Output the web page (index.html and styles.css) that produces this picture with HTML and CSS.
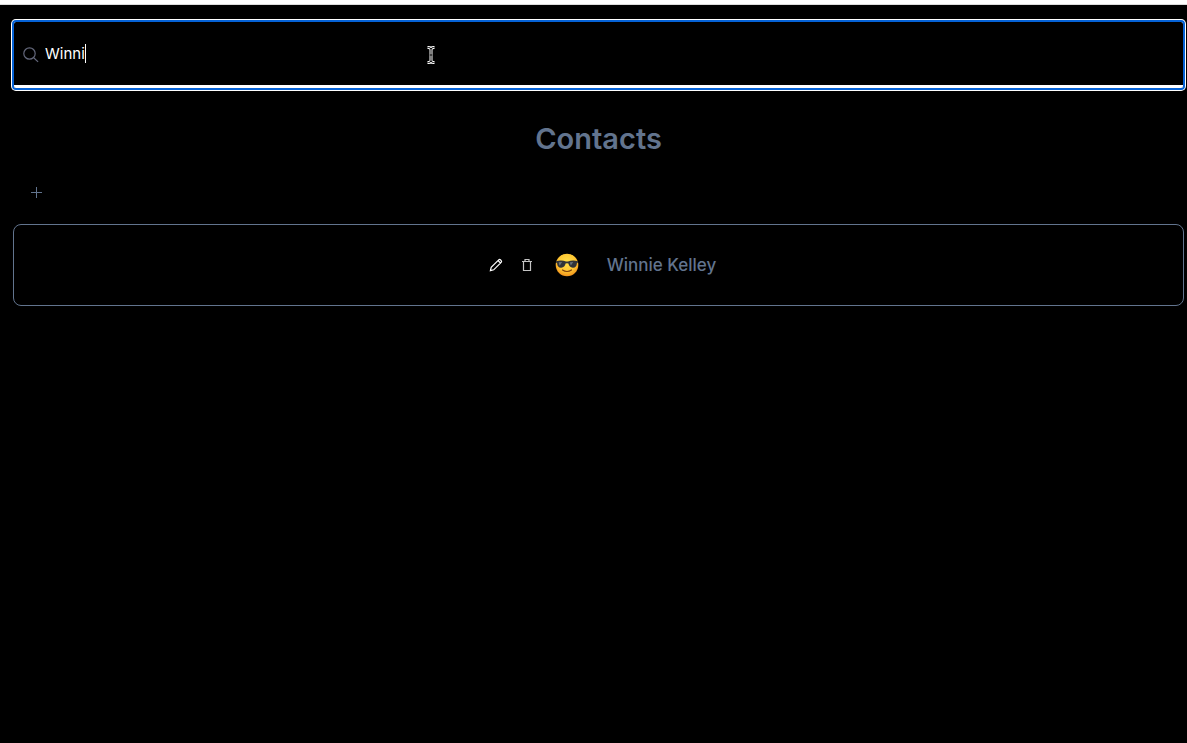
FILE: index.html
```html
<!DOCTYPE html>
<html lang="en">
<head>
<meta charset="utf-8">
<meta name="viewport" content="width=device-width, initial-scale=1">
<title>Contacts</title>
<link rel="stylesheet" href="styles.css">
</head>
<body>
<div class="top-strip"></div>
<main class="page">
  <form class="search" role="search">
    <svg class="search-icon" viewBox="0 0 16 16" aria-hidden="true"><circle cx="6.5" cy="6.5" r="5.7"/><path d="M10.700 10.700l4.400 4.200"/></svg>
    <input class="search-input" type="text" value="Winni" aria-label="Search contacts" autocomplete="off" spellcheck="false">
    <span class="caret"></span>
    <svg class="pointer" viewBox="0 0 10 20" aria-hidden="true">
      <path class="pointer-edge" d="M1.500 2.500h1q2.500 0 2.500 2q0-2 2.500-2h1M5 4.500v11M1.500 17.500h1q2.500 0 2.500-2q0 2 2.500 2h1M3.800 10h2.400"/>
      <path class="pointer-core" d="M1.500 2.500h1q2.500 0 2.500 2q0-2 2.500-2h1M5 4.500v11M1.500 17.500h1q2.500 0 2.500-2q0 2 2.500 2h1M3.800 10h2.400"/>
    </svg>
  </form>
  <h1 class="title">Contacts</h1>
  <button class="add" type="button" aria-label="Add contact">
    <svg class="add-icon" viewBox="0 0 12 12" aria-hidden="true"><path d="M6.5 1v11M1 6.500h11"/></svg>
  </button>
  <ul class="contacts">
    <li class="contact">
      <button class="action" type="button" aria-label="Edit">
        <svg class="action-icon edit-icon" viewBox="0 0 14 14" aria-hidden="true"><path d="M1.400 12.600l.8-3.300 7.500-7.500q.8-.8 1.700 0l.8.8q.8.9 0 1.700l-7.500 7.500zM9 2.500l2.500 2.500"/></svg>
      </button>
      <button class="action" type="button" aria-label="Delete">
        <svg class="action-icon delete-icon" viewBox="0 0 14 14" aria-hidden="true"><path d="M2 3.500h10M5 3.500v-2h4v2M3.500 3.500v9h7v-9"/></svg>
      </button>
      <svg class="avatar" viewBox="0 0 24 24" role="img" aria-label="Smiling face with sunglasses">
        <defs>
          <radialGradient id="face" cx="50%" cy="38%" r="65%"><stop offset="0" stop-color="#ffe04a"/><stop offset=".6" stop-color="#fec632"/><stop offset="1" stop-color="#f08a18"/></radialGradient>
        </defs>
        <circle cx="12" cy="12" r="11.300" fill="url(#face)"/>
        <path d="M.9 8.200Q6.500 6.900 11 8.400h2Q17.500 6.900 23.100 8.200l-.3 1.500-.9.5q-.3 4.300-3.800 4.500-3.800.2-4.700-4.100-1.400-.9-2.800 0-.9 4.300-4.700 4.100-3.500-.2-3.800-4.500l-.9-.5z" fill="#303338"/>
        <path d="M3.800 9.300l3.300-.2-2.400 3.600q-.9-1.200-.9-3.400zM15 9.300l3.300-.2-2.400 3.400q-.9-1.200-.9-3.200z" fill="#667078"/>
        <path d="M7.500 17Q12 20 16.500 17" fill="none" stroke="#7a3c0c" stroke-width="1.200" stroke-linecap="round"/>
      </svg>
      <span class="name">Winnie Kelley</span>
    </li>
  </ul>
</main>
</body>
</html>
```
FILE: styles.css
```css
* {
  box-sizing: border-box;
}

body {
  margin: 0;
  background: #000;
  color: #62748e;
  font-family: Inter, "Liberation Sans", sans-serif;
}

.top-strip {
  height: 5px;
  background: #fff;
  border-bottom: 1px solid #dcdcdc;
}

.page {
  padding: 17px 3px 0 13px;
}

.search {
  position: relative;
  display: flex;
  align-items: center;
  gap: 6px;
  height: 66px;
  margin: 0 1px;
  padding-left: 9px;
  border-bottom: 3px solid #fff;
  border-radius: 2px;
  box-shadow: 0 0 0 2px #0562d6, 0 0 0 3px #fff;
}

.search-icon {
  width: 16px;
  height: 16px;
  margin-top: 2px;
  fill: none;
  stroke: #64687c;
  stroke-width: 1.2;
}

.search-input {
  flex: 1;
  min-width: 0;
  height: 100%;
  padding: 0;
  border: 0;
  outline: 0;
  background: transparent;
  color: #fff;
  font: 400 15px/24px Inter, "Liberation Sans", sans-serif;
}

.caret {
  position: absolute;
  left: 71px;
  top: 22px;
  width: 1px;
  height: 19px;
  background: #fff;
}

.pointer {
  position: absolute;
  left: 412px;
  top: 23px;
  width: 10px;
  height: 20px;
  fill: none;
}

.pointer-edge {
  stroke: #fff;
  stroke-width: 3;
}

.pointer-core {
  stroke: #000;
  stroke-width: 1;
}

.title {
  margin: 33px 0 0;
  font-size: 29px;
  font-weight: 600;
  line-height: 36px;
  text-align: center;
}

.add {
  display: flex;
  align-items: center;
  justify-content: center;
  width: 46px;
  height: 40px;
  margin-top: 15px;
  padding: 0;
  border: 0;
  background: none;
}

.add-icon {
  width: 12px;
  height: 12px;
  fill: none;
  stroke: #62748e;
  stroke-width: 1;
}

.contacts {
  margin: 12px 0 0;
  padding: 0;
  list-style: none;
}

.contact {
  display: flex;
  align-items: center;
  justify-content: center;
  height: 82px;
  border: 1px solid #62748e;
  border-radius: 8px;
}

.action {
  display: flex;
  align-items: center;
  justify-content: center;
  width: 31px;
  height: 32px;
  padding: 0;
  border: 0;
  background: none;
}

.action-icon {
  width: 14px;
  height: 14px;
  fill: none;
}

.edit-icon {
  stroke: #fff;
  stroke-width: 1.2;
}

.delete-icon {
  stroke: #c4c4c4;
  stroke-width: 1.2;
}

.avatar {
  width: 24px;
  height: 24px;
  margin: 0 28px 0 12px;
}

.name {
  font-size: 17px;
  font-weight: 500;
  line-height: 28px;
}
```
